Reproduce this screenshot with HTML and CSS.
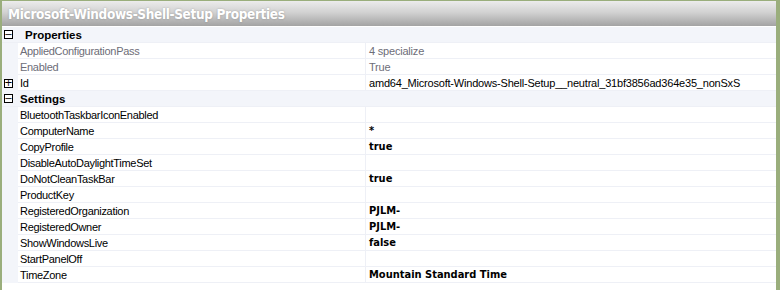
FILE: index.html
```html
<!DOCTYPE html>
<html lang="en">
<head>
    <meta charset="UTF-8">
    <title>Microsoft-Windows-Shell-Setup Properties</title>
    <link rel="stylesheet" href="styles.css">
</head>
<body>
    <div class="window">
        <div class="title-bar">Microsoft-Windows-Shell-Setup Properties</div>

        <div class="grid">
            <div class="cat-row">
                <span class="toggle">&minus;</span>
                <span class="cat-name first">Properties</span>
            </div>
            <div class="row readonly">
                <span class="margin"></span>
                <span class="name">AppliedConfigurationPass</span>
                <span class="value">4 specialize</span>
            </div>
            <div class="row readonly">
                <span class="margin"></span>
                <span class="name">Enabled</span>
                <span class="value">True</span>
            </div>
            <div class="row">
                <span class="margin"><span class="toggle">+</span></span>
                <span class="name">Id</span>
                <span class="value">amd64_Microsoft-Windows-Shell-Setup__neutral_31bf3856ad364e35_nonSxS</span>
            </div>

            <div class="cat-row">
                <span class="toggle">&minus;</span>
                <span class="cat-name">Settings</span>
            </div>
            <div class="row"><span class="margin"></span><span class="name">BluetoothTaskbarIconEnabled</span><span class="value"></span></div>
            <div class="row"><span class="margin"></span><span class="name">ComputerName</span><span class="value set">*</span></div>
            <div class="row"><span class="margin"></span><span class="name">CopyProfile</span><span class="value set">true</span></div>
            <div class="row"><span class="margin"></span><span class="name">DisableAutoDaylightTimeSet</span><span class="value"></span></div>
            <div class="row"><span class="margin"></span><span class="name">DoNotCleanTaskBar</span><span class="value set">true</span></div>
            <div class="row"><span class="margin"></span><span class="name">ProductKey</span><span class="value"></span></div>
            <div class="row"><span class="margin"></span><span class="name">RegisteredOrganization</span><span class="value set">PJLM-</span></div>
            <div class="row"><span class="margin"></span><span class="name">RegisteredOwner</span><span class="value set">PJLM-</span></div>
            <div class="row"><span class="margin"></span><span class="name">ShowWindowsLive</span><span class="value set">false</span></div>
            <div class="row"><span class="margin"></span><span class="name">StartPanelOff</span><span class="value"></span></div>
            <div class="row"><span class="margin"></span><span class="name">TimeZone</span><span class="value set">Mountain Standard Time</span></div>
        </div>
    </div>
</body>
</html>
```

FILE: styles.css
```css
*{margin:0;padding:0;box-sizing:border-box}
body{font-family:"Liberation Sans",Arial,sans-serif;font-size:11px;background:#fff;color:#000;width:780px;height:290px;overflow:hidden}

.window{border-top:1px solid #9aae7c;border-left:2px solid #9aae7c;border-right:4px solid #9aae7c;background:#fff;height:290px}

.title-bar{height:25px;padding-left:6px;display:flex;align-items:center;background:linear-gradient(#ececec,#d2d2d2 45%,#a3a3a3);color:#fff;font-family:"DejaVu Sans Condensed","DejaVu Sans",sans-serif;font-weight:700;font-size:13.5px;letter-spacing:-.35px;text-shadow:0 0 2px rgba(0,0,0,.25);margin-bottom:1px}

.grid{display:flex;flex-direction:column}

.cat-row{height:16px;display:flex;align-items:center;background:#f3f5fa;border-bottom:1px solid #eef0f6}
.cat-name{font-weight:700;font-size:11.5px;padding-left:7px}
.cat-name.first{padding-left:12px}

.toggle{width:9px;height:9px;border:1px solid #000;display:flex;align-items:center;justify-content:center;font-size:10px;line-height:1;margin-left:2px;background:#fff;font-family:"DejaVu Sans",sans-serif}

.row{height:16px;display:grid;grid-template-columns:16px 348px 1fr}
.margin{background:#f3f5fa;display:flex;align-items:center}
.name,.value{display:flex;align-items:center;border-bottom:1px solid #eef0f6;white-space:nowrap;overflow:hidden;letter-spacing:-.3px}
.name{padding-left:2px;border-right:1px solid #eef0f6}
.value{padding-left:3px;letter-spacing:-.2px}
.readonly .name,.readonly .value{color:#6d6d78}
.value.set{font-weight:700;font-family:"DejaVu Sans Condensed","DejaVu Sans",sans-serif;font-size:11px;letter-spacing:0}
```
